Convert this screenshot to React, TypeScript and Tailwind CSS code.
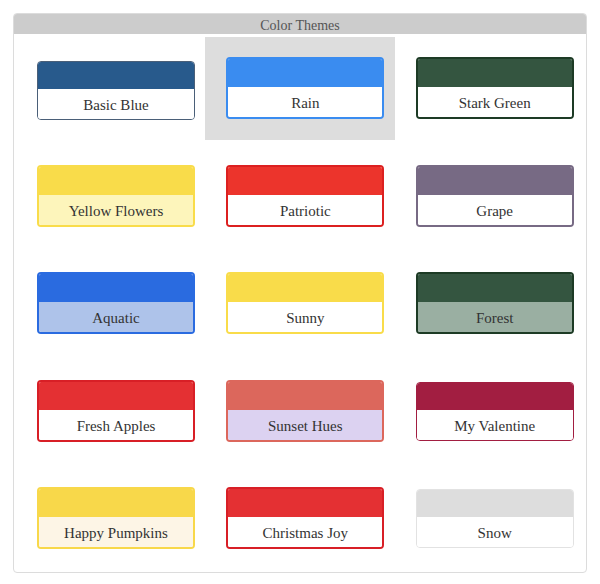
type Theme = {
  name: string;
  head: string;
  border: string;
  body: string;
  thin?: boolean;
};

// row by row, three per row
const themes: Theme[] = [
  { name: "Basic Blue", head: "bg-[#285a8c]", border: "border-[#4a5f78]", body: "bg-white", thin: true },
  { name: "Rain", head: "bg-[#3a8cf0]", border: "border-[#3a8cf0]", body: "bg-white" },
  { name: "Stark Green", head: "bg-[#345540]", border: "border-[#1d3b25]", body: "bg-white" },
  { name: "Yellow Flowers", head: "bg-[#f9dc4a]", border: "border-[#f9dc4a]", body: "bg-[#fdf5bb]" },
  { name: "Patriotic", head: "bg-[#ec342c]", border: "border-[#dc2020]", body: "bg-white" },
  { name: "Grape", head: "bg-[#776a84]", border: "border-[#776a84]", body: "bg-white" },
  { name: "Aquatic", head: "bg-[#2a6be0]", border: "border-[#2a6be0]", body: "bg-[#aec3ea]" },
  { name: "Sunny", head: "bg-[#f9dc4a]", border: "border-[#f9dc4a]", body: "bg-white" },
  { name: "Forest", head: "bg-[#345540]", border: "border-[#1d3b25]", body: "bg-[#9aafa2]" },
  { name: "Fresh Apples", head: "bg-[#e43033]", border: "border-[#d81f26]", body: "bg-white" },
  { name: "Sunset Hues", head: "bg-[#dc675c]", border: "border-[#dc675c]", body: "bg-[#dcd2f1]" },
  { name: "My Valentine", head: "bg-[#a21e41]", border: "border-[#a21e41]", body: "bg-white", thin: true },
  { name: "Happy Pumpkins", head: "bg-[#f8d84a]", border: "border-[#f8d84a]", body: "bg-[#fdf5e6]" },
  { name: "Christmas Joy", head: "bg-[#e43033]", border: "border-[#d81f26]", body: "bg-white" },
  { name: "Snow", head: "bg-[#dddddd]", border: "border-[#e2e2e2]", body: "bg-white", thin: true },
];

const selected = "Rain";

function ThemeCard({ theme }: { theme: Theme }) {
  const active = theme.name === selected;
  const first = theme.name === "Basic Blue";
  return (
    <div className={`h-[103px] ${active ? "bg-[#dddddd]" : ""}`}>
      {theme.thin ? (
        <div className={`ml-[21px] ${first ? "mt-[24px]" : "mt-[22px]"} flex h-[59px] w-[158px] flex-col overflow-hidden rounded-[4px] border ${theme.border}`}>
          <div className={`h-[27px] ${theme.head}`} />
          <div className={`flex flex-1 items-center justify-center pt-[3px] ${theme.body} text-[15px] text-[#333]`}>{theme.name}</div>
        </div>
      ) : (
        <div className={`ml-[21px] mt-[20px] flex h-[62px] w-[158px] flex-col overflow-hidden rounded-[4px] border-2 ${theme.border}`}>
          <div className={`h-[28px] ${theme.head}`} />
          <div className={`flex flex-1 items-center justify-center pt-[3px] ${theme.body} text-[15px] text-[#333]`}>{theme.name}</div>
        </div>
      )}
    </div>
  );
}

export default function App() {
  return (
    <div className="min-h-[584px] bg-white px-[13px] pt-[13px] font-['Liberation_Serif',serif]">
      <div className="h-[560px] overflow-hidden rounded-[4px] border border-[#dcdcdc]">
        <div className="h-[20px] bg-[#cccccc] pt-[3px] text-center text-[14px] leading-[17px] text-[#555]">Color Themes</div>
        <div className="grid grid-cols-3 gap-y-[4.5px] px-[2px] pt-[3px]">
          {themes.map((t) => (
            <ThemeCard key={t.name} theme={t} />
          ))}
        </div>
      </div>
    </div>
  );
}
